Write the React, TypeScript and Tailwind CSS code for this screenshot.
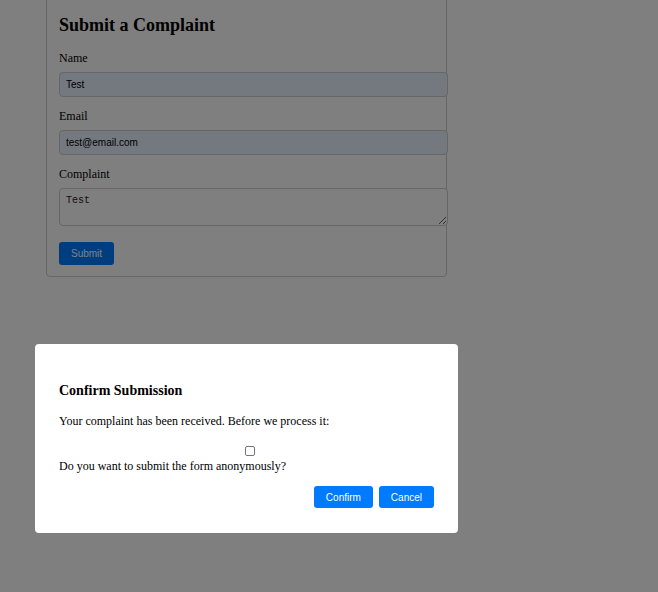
import React from "react";

const serif = "font-['Liberation_Serif','Times_New_Roman',serif]";
const sans = "font-['Liberation_Sans',Arial,sans-serif]";

function Field({ label, value, type = "text" }: { label: string; value: string; type?: string }) {
  return (
    <div className="mb-[12px]">
      <label className="mb-[7px] block leading-[14px]">{label}</label>
      <input
        type={type}
        defaultValue={value}
        className={`box-border block h-[25px] w-[389px] rounded-[4px] border border-[#ccc] bg-[#e8f0fe] px-[6px] text-[10px] leading-[12px] text-black outline-none ${sans}`}
      />
    </div>
  );
}

export default function App() {
  return (
    <div className={`relative h-[592px] overflow-hidden bg-white text-[12px] text-black ${serif}`}>
      <div className="-mt-[6px] ml-[46px] w-[401px] rounded-[4px] border border-[#ccc] px-[12px] pb-[11px] pt-[20px]">
        <h2 className="mb-[16px] text-[18px] font-bold leading-[20px]">Submit a Complaint</h2>
        <Field label="Name" value="Test" />
        <Field label="Email" value="test@email.com" type="email" />
        <div>
          <label className="mb-[7px] block leading-[14px]">Complaint</label>
          <textarea
            defaultValue="Test"
            className="box-border block h-[38px] w-[389px] rounded-[4px] border border-[#ccc] bg-white px-[6px] py-[6px] font-['Liberation_Mono','DejaVu_Sans_Mono',monospace] text-[10px] leading-[12px] text-[#2b1a1a] outline-none"
          />
        </div>
        <button
          className={`mt-[16px] h-[23px] rounded-[3px] bg-[#007bff] px-[12px] text-[10px] text-white ${sans}`}
        >
          Submit
        </button>
      </div>

      <div className="fixed inset-0 bg-black/50" />

      <div className="absolute left-[35px] top-[344px] box-border h-[189px] w-[423px] rounded-[4px] bg-white px-[24px] pt-[39px]">
        <h3 className="text-[14px] font-bold leading-[16px]">Confirm Submission</h3>
        <p className="mt-[15px] leading-[14px]">Your complaint has been received. Before we process it:</p>
        <input
          type="checkbox"
          className="ml-[186px] mt-[18px] block h-[10px] w-[10px] appearance-none rounded-[2px] border border-[#767676] bg-white"
        />
        <div className="mt-[3px] leading-[14px]">Do you want to submit the form anonymously?</div>
        <div className="mt-[13px] flex justify-end gap-[6px]">
          <button className={`h-[22px] rounded-[3px] bg-[#007bff] px-[12px] text-[10px] text-white ${sans}`}>
            Confirm
          </button>
          <button className={`h-[22px] rounded-[3px] bg-[#007bff] px-[12px] text-[10px] text-white ${sans}`}>
            Cancel
          </button>
        </div>
      </div>
    </div>
  );
}
